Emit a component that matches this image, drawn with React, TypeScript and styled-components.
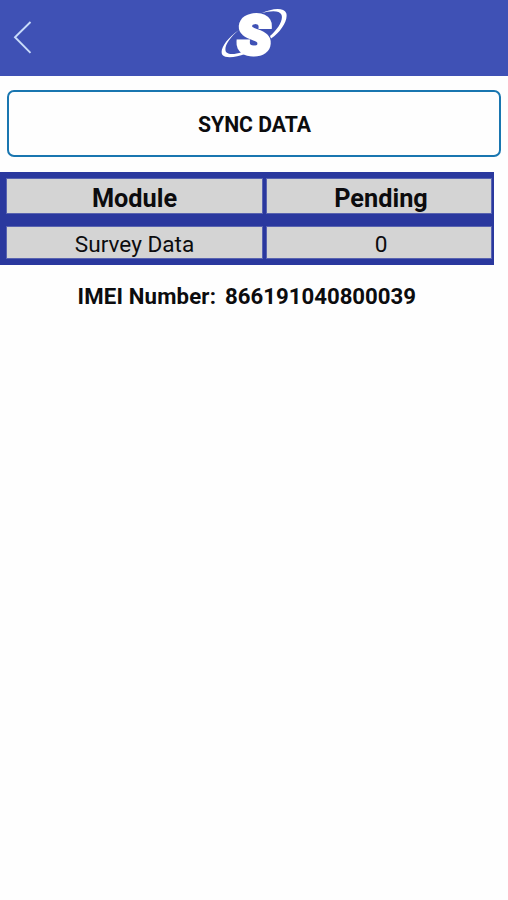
import React from "react";
import styled, { createGlobalStyle } from "styled-components";

const GlobalStyle = createGlobalStyle`
  * { box-sizing: border-box; }
  body {
    margin: 0;
    background: #fefefe;
    color: #0c0c0e;
    font-family: Roboto, "Liberation Sans", sans-serif;
  }
`;

const Screen = styled.main`
  display: flex;
  flex-direction: column;
  min-height: 900px;
`;

const Header = styled.header`
  display: grid;
  grid-template-columns: 60px 1fr 60px;
  height: 76px;
  background: #3f51b5;
`;

const BackButton = styled.button`
  display: flex;
  padding: 20px 0 0 12px;
  border: 0;
  background: none;
`;

const LogoSlot = styled.div`
  display: flex;
  justify-content: center;
`;

const LogoLetter = styled.text`
  font-family: Roboto, sans-serif;
  font-size: 54px;
  font-weight: 900;
  fill: #fff;
  stroke: #fff;
  stroke-width: 4;
  stroke-linejoin: miter;
`;

const SyncButton = styled.button`
  height: 67px;
  margin: 14px 7px 0;
  padding: 2px 0 0 1px;
  border: 2px solid #1976b0;
  border-radius: 7px;
  background: #fefefe;
  color: inherit;
  font: 700 21.2px/24px Roboto, sans-serif;
`;

const ModuleTable = styled.div`
  display: grid;
  grid-template-columns: 255px 224px;
  grid-template-rows: 34px 31px;
  gap: 14px 5px;
  width: 494px;
  margin-top: 15px;
  padding: 7px 3px 7px 7px;
  background: #2a389e;
`;

const Cell = styled.div<{ $heading?: boolean }>`
  display: flex;
  align-items: center;
  justify-content: center;
  padding-top: ${({ $heading }) => ($heading ? "5px" : "3px")};
  background: #d4d4d4;
  box-shadow: 0 0 0 1px #5863b0;
  font-size: ${({ $heading }) => ($heading ? "25.3px" : "22.6px")};
  font-weight: ${({ $heading }) => ($heading ? 700 : 400)};

  &:nth-child(even) {
    padding-left: 4px;
  }
`;

const DeviceLine = styled.p`
  display: flex;
  gap: 9px;
  margin: 17px 0 0 77.5px;
  font-size: 22.2px;
  font-weight: 700;
  line-height: 28px;
`;

const DeviceLabel = styled.span`
  letter-spacing: 0.17px;
`;

export default function App() {
  return (
    <>
      <GlobalStyle />
      <Screen>
        <Header>
          <BackButton aria-label="Back">
            <svg width="22" height="36" viewBox="0 0 22 36" fill="none" stroke="#c9dcfa" strokeWidth="1.9">
              <path d="M18.5 2 3 17.2 18.5 32.8" />
            </svg>
          </BackButton>
          <LogoSlot>
            <svg width="70" height="70" viewBox="0 0 70 70" role="img" aria-label="S">
              <path
                fill="#fff"
                d="M42 13.5C54 7.5 65 7.5 67.2 13C69.5 20 62 32 52 38.5L51 36C59 29 64.5 20 62.5 14.8C60.5 10 51 10.5 42 13.5ZM20 30C7 39 0 50 3.5 55C7 59 18 57 26 54L23 52C15 55 9 54.5 7 52C4.5 47 10 38 20 30Z"
              />
              <LogoLetter transform="translate(17 53.5) skewX(-4)">S</LogoLetter>
            </svg>
          </LogoSlot>
        </Header>
        <SyncButton>SYNC DATA</SyncButton>
        <ModuleTable>
          <Cell $heading>Module</Cell>
          <Cell $heading>Pending</Cell>
          <Cell>Survey Data</Cell>
          <Cell>0</Cell>
        </ModuleTable>
        <DeviceLine>
          <DeviceLabel>IMEI Number:</DeviceLabel>
          <span>866191040800039</span>
        </DeviceLine>
      </Screen>
    </>
  );
}
